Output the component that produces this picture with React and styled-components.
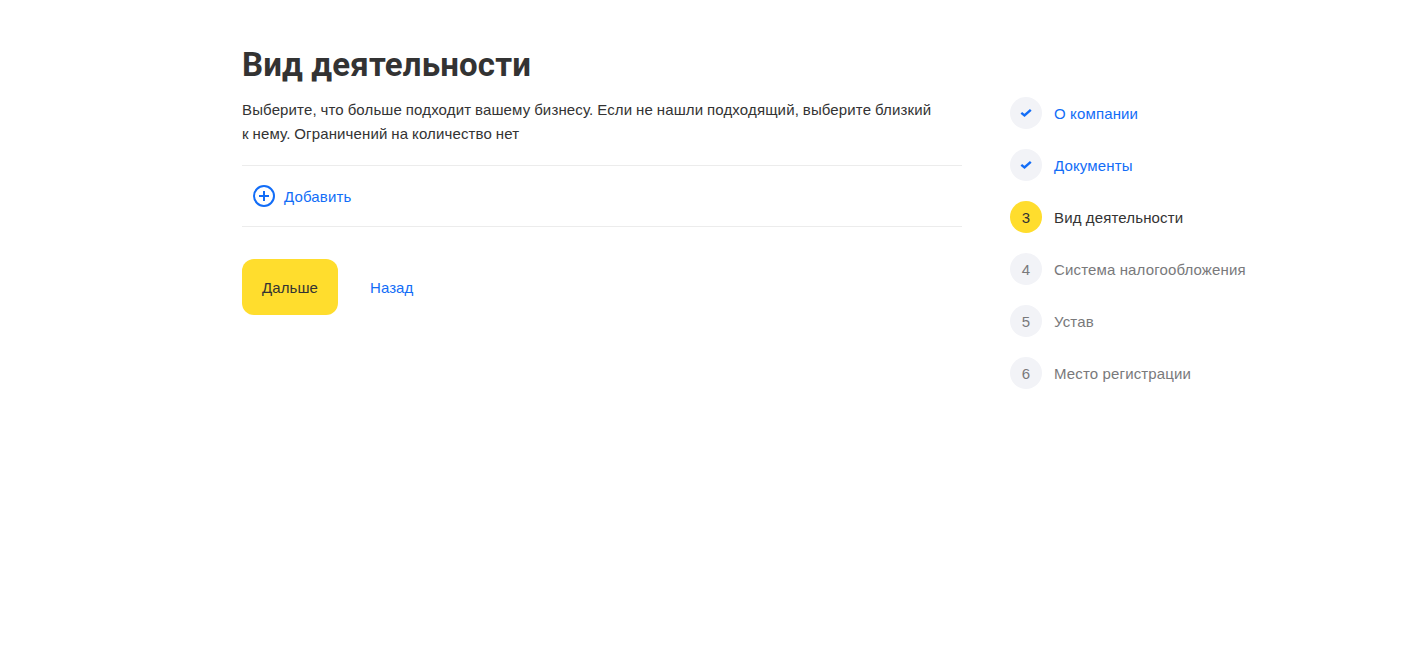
import React from "react";
import styled, { createGlobalStyle } from "styled-components";

const steps = [
  { title: "О компании", state: "done" },
  { title: "Документы", state: "done" },
  { title: "Вид деятельности", state: "active" },
  { title: "Система налогообложения", state: "next" },
  { title: "Устав", state: "next" },
  { title: "Место регистрации", state: "next" },
];

function App() {
  return (
    <>
      <GlobalStyle />
      <Container>
        <Content>
          <Title>Вид деятельности</Title>
          <Description>
            Выберите, что больше подходит вашему бизнесу. Если не нашли
            подходящий, выберите близкий
            <br />к нему. Ограничений на количество нет
          </Description>
          <AddRow>
            <PlusIcon viewBox="0 0 24 24">
              <circle cx="12" cy="12" r="10" />
              <path d="M12 7v10M7 12h10" />
            </PlusIcon>
            <Label>Добавить</Label>
          </AddRow>
          <Actions>
            <NextButton>Дальше</NextButton>
            <BackButton>Назад</BackButton>
          </Actions>
        </Content>
        <Steps>
          {steps.map((step, index) => (
            <Step key={step.title} $state={step.state}>
              <Badge $state={step.state}>
                {step.state === "done" ? (
                  <CheckIcon viewBox="0 0 12 10">
                    <path d="M1.3 4.8l3.2 2.7L10.8 1.8" />
                  </CheckIcon>
                ) : (
                  <Label>{index + 1}</Label>
                )}
              </Badge>
              <Label>{step.title}</Label>
            </Step>
          ))}
        </Steps>
      </Container>
    </>
  );
}

export default App;

const stepColors = {
  done: "#126df7",
  active: "#333",
  next: "#79797b",
};

const GlobalStyle = createGlobalStyle`
  * {
    box-sizing: border-box;
  }

  body {
    margin: 0;
    background: #fff;
    color: #333;
    font-family: "Liberation Sans", Arial, sans-serif;
    font-size: 15px;
    line-height: 24px;
    letter-spacing: 0.06px;
  }
`;

const Container = styled.div`
  display: flex;
  gap: 48px;
  padding: 45px 0 0 242px;
`;

const Content = styled.main`
  width: 720px;
`;

const Title = styled.h1`
  margin: 0 0 13px;
  font-family: Roboto, sans-serif;
  font-size: 33px;
  font-weight: 700;
  line-height: 40px;
  letter-spacing: 0.15px;
  white-space: nowrap;
`;

const Description = styled.p`
  margin: 0;
  letter-spacing: 0.14px;
  word-spacing: -0.5px;
  white-space: nowrap;
`;

const Label = styled.span`
  padding-top: 2px;
  letter-spacing: 0.14px;
`;

const AddRow = styled.div`
  display: flex;
  align-items: center;
  gap: 8px;
  height: 62px;
  margin-top: 19px;
  padding-left: 10px;
  border-top: 1px solid #ececec;
  border-bottom: 1px solid #ececec;
  color: #126df7;
`;

const PlusIcon = styled.svg`
  width: 24px;
  height: 24px;
  fill: none;
  stroke: currentColor;
  stroke-width: 2;
`;

const Actions = styled.div`
  display: flex;
  gap: 32px;
  margin-top: 32px;
`;

const Button = styled.button`
  height: 56px;
  padding: 2px 0 0;
  border: none;
  background: none;
  font: inherit;
  letter-spacing: inherit;
  cursor: pointer;
`;

const NextButton = styled(Button)`
  width: 96px;
  border-radius: 12px;
  background: #ffdd2d;
  color: #333;
`;

const BackButton = styled(Button)`
  color: #126df7;
`;

const Steps = styled.aside`
  display: flex;
  flex-direction: column;
  gap: 20px;
  padding-top: 52px;
`;

const Step = styled.div`
  display: flex;
  align-items: center;
  gap: 12px;
  height: 32px;
  color: ${({ $state }) => stepColors[$state]};
  white-space: nowrap;
`;

const Badge = styled.span`
  display: flex;
  align-items: center;
  justify-content: center;
  width: 32px;
  height: 32px;
  border-radius: 50%;
  background: ${({ $state }) => ($state === "active" ? "#ffdd2d" : "#f2f3f7")};
`;

const CheckIcon = styled.svg`
  width: 12px;
  height: 10px;
  fill: none;
  stroke: currentColor;
  stroke-width: 2.4;
`;
